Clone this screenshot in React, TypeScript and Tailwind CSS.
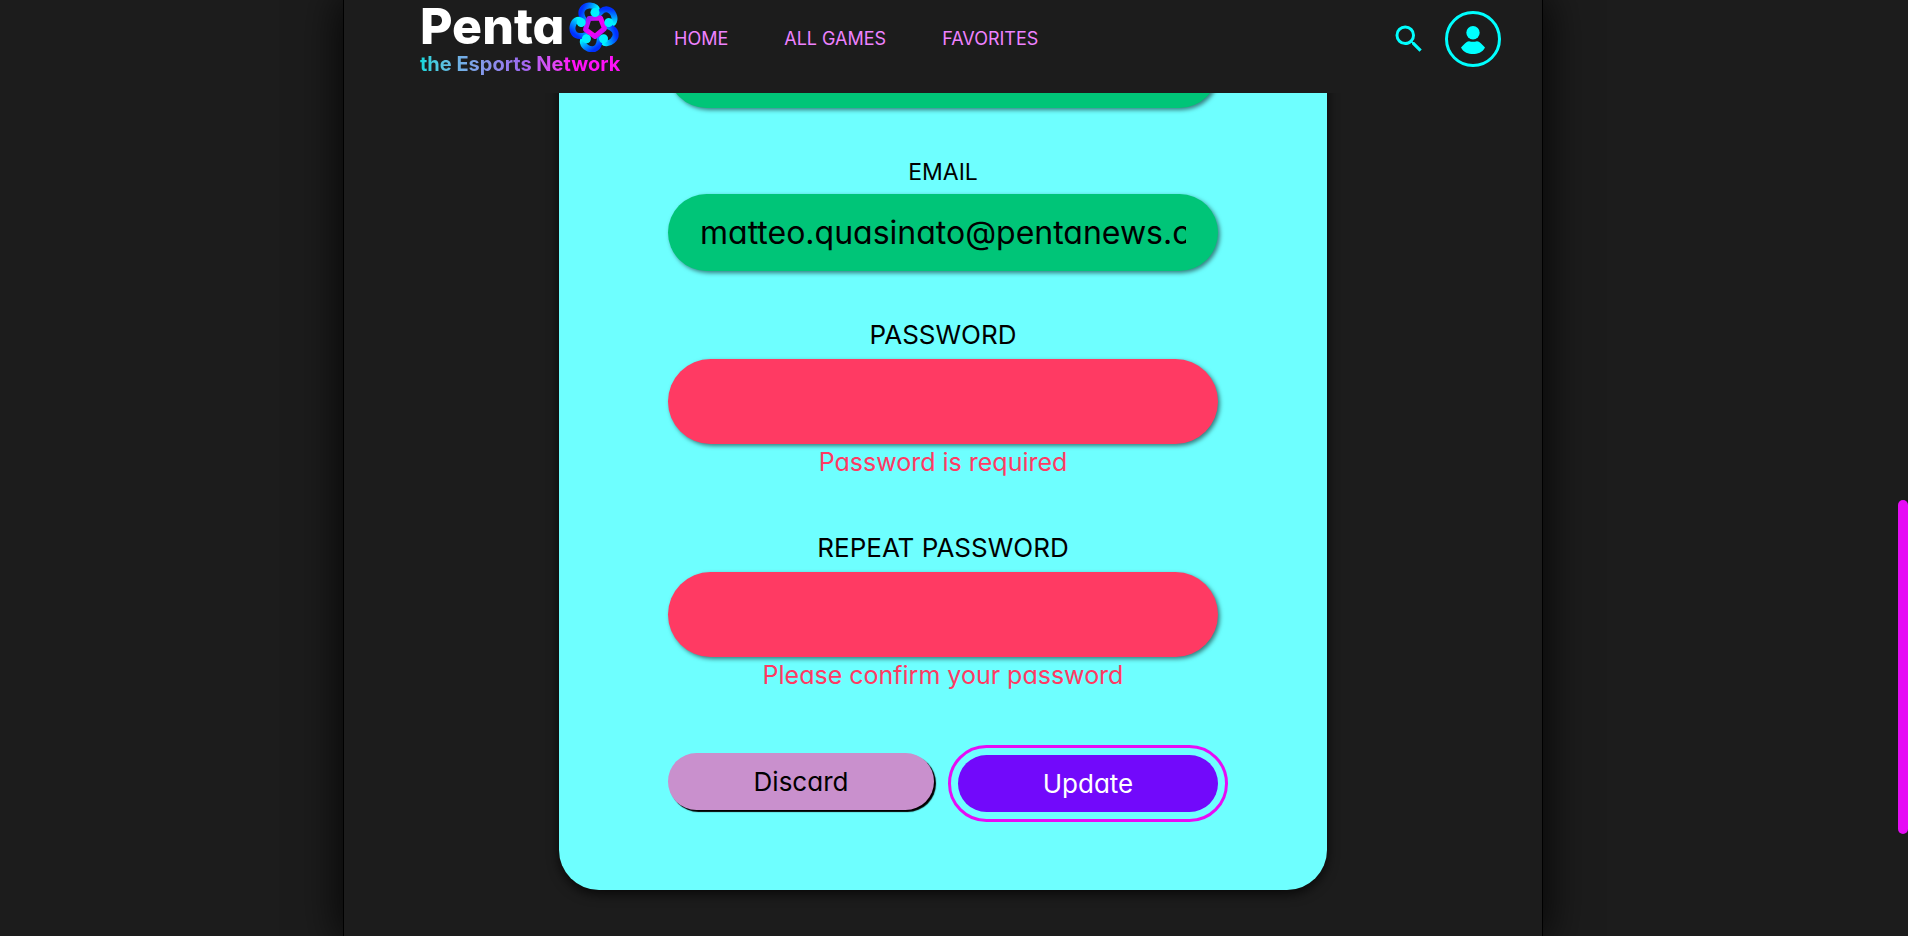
import { useState } from "react";
import type { ReactNode } from "react";
import { MdSearch } from "react-icons/md";

const NAV = ["HOME", "ALL GAMES", "FAVORITES"];
const PETALS = [0, 72, 144, 216, 288];

function Flower() {
  return (
    <svg viewBox="-26 -27 52 52" className="size-13" aria-hidden="true">
      <defs>
        <linearGradient id="petal" gradientUnits="userSpaceOnUse" x1="1" y1="-13" x2="-13" y2="-18">
          <stop offset="0" stopColor="#00f6ff" />
          <stop offset="0.5" stopColor="#0090ff" />
          <stop offset="1" stopColor="#0030ff" />
        </linearGradient>
        <linearGradient id="core" x1="0" y1="0" x2="1" y2="1">
          <stop offset="0" stopColor="#8a1cff" />
          <stop offset="0.5" stopColor="#f500f5" />
          <stop offset="1" stopColor="#c010ff" />
        </linearGradient>
      </defs>
      {PETALS.map((angle) => (
        <path
          key={angle}
          transform={`rotate(${angle})`}
          d="M1 -14 C4 -19 -1 -22 -6 -21.500 C-12 -21 -15 -16 -13 -11 C-12.500 -9.500 -12 -8.500 -11 -7"
          fill="none"
          stroke="url(#petal)"
          strokeWidth="6"
          strokeLinecap="round"
        />
      ))}
      <path
        d="M-6 -8.500 L5.500 -9 L9.500 1.500 L0 9.500 L-9.500 2.500 Z"
        fill="none"
        stroke="url(#core)"
        strokeWidth="5"
        strokeLinejoin="round"
      />
      {PETALS.map((angle) => (
        <circle key={angle} transform={`rotate(${angle})`} cx="0" cy="-14.500" r="4.500" fill="#00f0ff" />
      ))}
    </svg>
  );
}

function Logo() {
  return (
    <a href="#" className="flex w-[201px] flex-col">
      <span className="flex h-13 items-center justify-between">
        <span className="text-[50px] leading-13 font-extrabold text-white">Penta</span>
        <Flower />
      </span>
      <span className="w-fit bg-linear-to-r from-[#00d8dc] via-[#9a6cf0] via-50% to-[#ff10f8] to-75% bg-clip-text text-[20px] leading-6 font-bold whitespace-nowrap text-transparent">
        the Esports Network
      </span>
    </a>
  );
}

function Avatar() {
  return (
    <svg viewBox="0 0 56 56" className="size-14" fill="#00ffff" aria-hidden="true">
      <circle cx="28" cy="28" r="26.500" fill="none" stroke="#00ffff" strokeWidth="3" />
      <circle cx="28" cy="21.700" r="6.700" />
      <path d="M16 36.500 C19 33 21.500 30.500 24 30.200 C27 31 29 31 32 30.200 C34.500 30.500 37 33 40 36.500 C37.500 41.500 32.500 43 28 43 C23.500 43 18.500 41.500 16 36.500 Z" />
    </svg>
  );
}

function Field({ id, label, error, labelSize, className, children }: {
  id: string;
  label: string;
  error?: string;
  labelSize: string;
  className: string;
  children: ReactNode;
}) {
  return (
    <div className={`flex flex-col items-center ${className}`}>
      <label htmlFor={id} className={`leading-8 ${labelSize}`}>{label}</label>
      {children}
      {error && <p className="text-[25px] leading-9 text-[#ff3a63]">{error}</p>}
    </div>
  );
}

const inputBase = "w-full rounded-full px-8 text-[32px] text-black outline-none shadow-[2px_2px_4px_rgba(0,0,0,0.5)]";
const valid = `${inputBase} h-[77px] bg-[#00c578]`;
const invalid = `${inputBase} mt-2 h-[85px] bg-[#ff3a63]`;

export default function App() {
  const [name, setName] = useState("");
  const [email, setEmail] = useState("matteo.quasinato@pentanews.com");
  const [password, setPassword] = useState("");
  const [repeat, setRepeat] = useState("");

  return (
    <div className="relative flex h-screen justify-center overflow-hidden bg-[#1c1c1c] pr-[22px] font-['Inter',sans-serif] text-black [font-feature-settings:'cv11']">
      <div className="flex w-full max-w-[1200px] flex-col border-x border-black bg-[#1c1c1c] shadow-[0_0_40px_4px_rgba(0,0,0,0.8)]">
        <header className="flex h-[93px] shrink-0 items-start pr-[41px] pl-[76px]">
          <Logo />
          <nav className="ml-[53px] flex h-[78px] items-center gap-14">
            {NAV.map((item) => (
              <a key={item} href="#" className="text-lg leading-6 text-[#ee82ff]">{item}</a>
            ))}
          </nav>
          <div className="ml-auto flex h-[78px] items-center gap-[18px]">
            <button type="button" aria-label="Search">
              <MdSearch className="size-9 text-[#00ffff]" />
            </button>
            <button type="button" aria-label="Account">
              <Avatar />
            </button>
          </div>
        </header>

        <main className="flex min-h-0 flex-1 flex-col items-center justify-end overflow-hidden pb-[46px]">
          <form
            onSubmit={(e) => e.preventDefault()}
            className="flex w-full max-w-[768px] shrink-0 flex-col rounded-[40px] bg-[#6effff] px-[109px] pt-16 pb-[78px] shadow-[0_4px_12px_rgba(0,0,0,0.7)]"
          >
            <input aria-label="Username" className={valid} value={name} onChange={(e) => setName(e.target.value)} />
            <Field id="email" label="EMAIL" labelSize="text-[23px]" className="mt-12 gap-1.5">
              <input id="email" type="email" className={valid} value={email} onChange={(e) => setEmail(e.target.value)} />
            </Field>
            <Field id="password" label="PASSWORD" labelSize="text-[26px]" error="Password is required" className="mt-12">
              <input id="password" type="password" className={invalid} value={password} onChange={(e) => setPassword(e.target.value)} />
            </Field>
            <Field id="repeat" label="REPEAT PASSWORD" labelSize="text-[26px]" error="Please confirm your password" className="mt-13">
              <input id="repeat" type="password" className={invalid} value={repeat} onChange={(e) => setRepeat(e.target.value)} />
            </Field>
            <div className="mt-[60px] flex h-[59px] justify-between">
              <button type="button" className="h-[57px] w-[266px] self-start rounded-full bg-[#c990cd] text-[26px] shadow-[2px_2px_1px_#000]">
                Discard
              </button>
              <button type="submit" className="h-[57px] w-[260px] self-end rounded-full bg-[#7209fb] text-[26px] text-white outline-3 outline-offset-7 outline-[#e60cf5]">
                Update
              </button>
            </div>
          </form>
        </main>
      </div>
      <div className="absolute top-[500px] right-0 h-[334px] w-2.5 rounded-full bg-[#e60cf5]" />
    </div>
  );
}
